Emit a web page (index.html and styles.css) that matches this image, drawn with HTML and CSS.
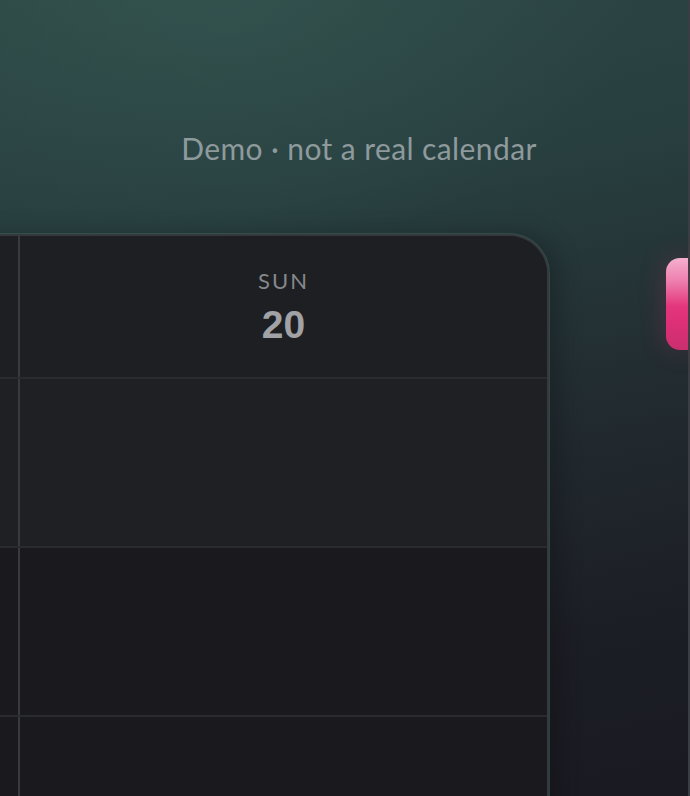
FILE: index.html
```
<!DOCTYPE html>
<html>
<head>
    <title>Calendar demo</title>
    <link rel="stylesheet" href="styles.css">
</head>
<body>
    <div class="app">
        <!-- caption -->
        <p class="caption">Demo · not a real calendar</p>

        <div class="board">
            <!-- calendar card, only the last day visible -->
            <div class="calendar">
                <div class="row head">
                    <div class="gutter"></div>
                    <div class="day">
                        <span class="day-name">SUN</span>
                        <span class="day-num">20</span>
                    </div>
                </div>
                <div class="row slot light">
                    <div class="gutter"></div>
                    <div class="cell"></div>
                </div>
                <div class="row slot">
                    <div class="gutter"></div>
                    <div class="cell"></div>
                </div>
                <div class="row slot">
                    <div class="gutter"></div>
                    <div class="cell"></div>
                </div>
            </div>

            <!-- side rail -->
            <div class="rail">
                <button class="tab"></button>
            </div>
        </div>
    </div>
</body>
</html>
```

FILE: styles.css
```
/* page */
body {
    margin: 0;
    width: 690px;
    height: 796px;
    overflow: hidden;
    font-family: Lato, "Liberation Sans", sans-serif;
    background:
        radial-gradient(ellipse 420px 260px at 220px -10px, rgba(60, 100, 92, 0.4), rgba(60, 100, 92, 0) 100%),
        linear-gradient(168deg, #2d4745 0%, #283f40 28%, #222c31 55%, #1c1e25 80%, #1a1b22 100%);
}
.app {
    height: 796px;
    border-right: 2px solid #3a3d43;
    box-sizing: border-box;
}
.caption {
    margin: 0;
    padding: 128px 0 66px 30px;
    line-height: 40px;
    text-align: center;
    font-size: 30px;
    font-weight: 400;
    letter-spacing: 0.4px;
    color: #8e9a9c;
}
.board {
    display: flex;
    align-items: flex-start;
}

/* calendar card */
.calendar {
    flex: none;
    width: 745px;
    margin-left: -200px;
    border: 2px solid #35383c;
    border-bottom: none;
    border-radius: 0 40px 0 0;
    background-color: #1a1a1e;
    box-shadow: 0 0 0 1px rgba(64, 100, 92, 0.55), 10px 0 24px rgba(0, 0, 0, 0.22);
    overflow: hidden;
}
.row {
    display: flex;
}
.gutter {
    width: 216px;
    flex: none;
    border-right: 2px solid #393a3e;
}
.head {
    height: 141px;
    background-color: #1d1f22;
    border-bottom: 2px solid #292b2f;
}
.day {
    flex: 1;
    display: flex;
    flex-direction: column;
    align-items: center;
    padding-top: 32px;
}
.day-name {
    font-size: 22px;
    letter-spacing: 2px;
    line-height: 26px;
    color: #85888c;
}
.day-num {
    margin-top: 10px;
    font-family: "Liberation Sans", Arial, sans-serif;
    font-weight: bold;
    font-size: 39px;
    line-height: 42px;
    color: #a1a2a6;
}
.slot {
    height: 167px;
    border-bottom: 2px solid #2a2b2f;
}
.slot.light {
    background-color: #1f2024;
}
.cell {
    flex: 1;
}

/* right rail */
.rail {
    flex: 1;
    display: flex;
    justify-content: flex-end;
    padding-top: 24px;
}
.tab {
    width: 22px;
    height: 92px;
    border: none;
    border-radius: 14px 0 0 14px;
    background: linear-gradient(180deg, #f5b0d0 0%, #ee7fae 25%, #e3377c 52%, #de2f77 70%, #c92f6d 100%);
    box-shadow: 0 0 26px rgba(220, 50, 110, 0.25);
    padding: 0;
}
```
